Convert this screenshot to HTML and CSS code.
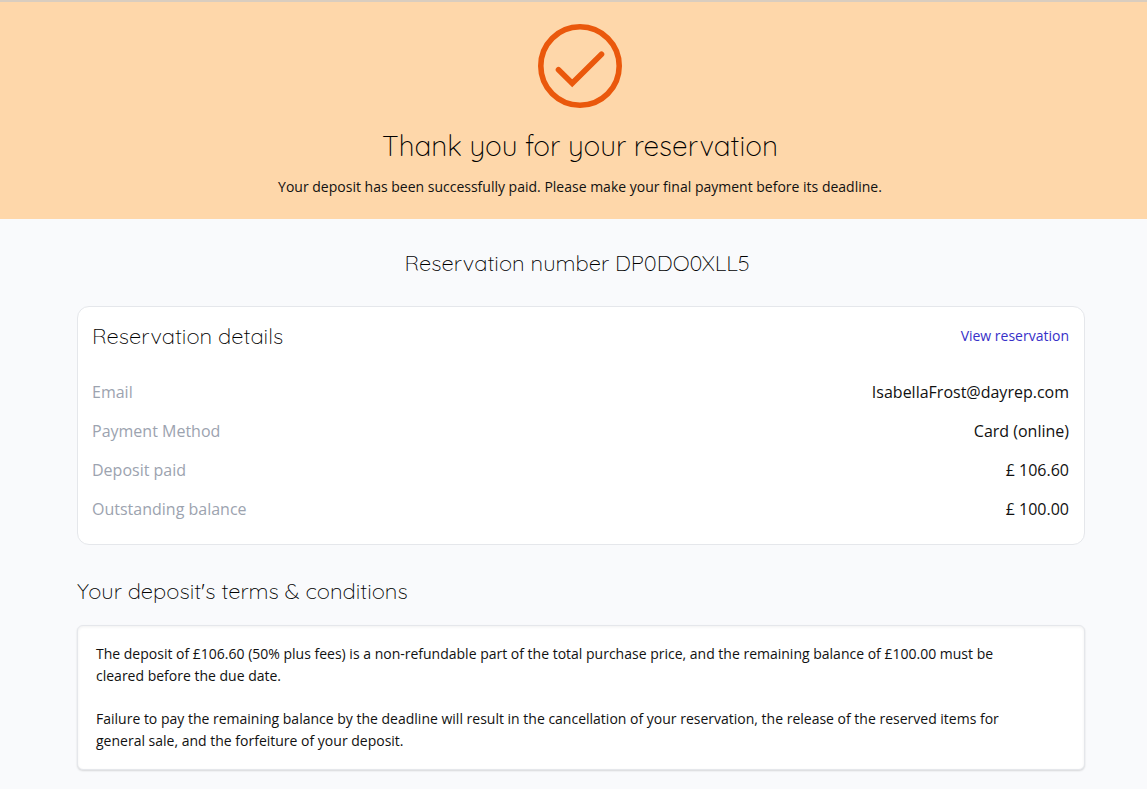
FILE: index.html
```html
<!DOCTYPE html>
<html lang="en">
<head>
    <meta charset="utf-8" />
    <meta name="viewport" content="width=device-width, initial-scale=1">
    <title>Reservation confirmed</title>
    <link rel="stylesheet" href="styles.css">
</head>
<body>
    <header class="hero">
        <svg class="check" viewBox="0 0 84 84" aria-hidden="true">
            <circle cx="42" cy="42" r="39.2" />
            <path d="M20.5 45.8 L34.2 59.2 L63.5 30.2" />
        </svg>
        <h1>Thank you for your reservation</h1>
        <p>Your deposit has been successfully paid. Please make your final payment before its deadline.</p>
    </header>

    <main class="content">
        <h2 class="number">Reservation number DP0DO0XLL5</h2>

        <section class="card">
            <div class="card-head">
                <h2>Reservation details</h2>
                <a href="#">View reservation</a>
            </div>
            <dl class="details">
                <div class="row">
                    <dt>Email</dt>
                    <dd>IsabellaFrost@dayrep.com</dd>
                </div>
                <div class="row">
                    <dt>Payment Method</dt>
                    <dd>Card (online)</dd>
                </div>
                <div class="row">
                    <dt>Deposit paid</dt>
                    <dd>£ 106.60</dd>
                </div>
                <div class="row">
                    <dt>Outstanding balance</dt>
                    <dd>£ 100.00</dd>
                </div>
            </dl>
        </section>

        <h2 class="terms-title">Your deposit's terms &amp; conditions</h2>
        <section class="terms">
            <p>The deposit of £106.60 (50% plus fees) is a non-refundable part of the total purchase price, and the remaining balance of £100.00 must be cleared before the due date.</p>
            <p>Failure to pay the remaining balance by the deadline will result in the cancellation of your reservation, the release of the reserved items for general sale, and the forfeiture of your deposit.</p>
        </section>
    </main>
</body>
</html>
```

FILE: styles.css
```css
* {
    box-sizing: border-box;
    margin: 0;
    padding: 0;
}

body {
    background: #f9fafc;
    color: #111;
    font-family: "Open Sans", "Noto Sans", sans-serif;
    font-size: 14px;
    line-height: 22px;
}

h1, h2 {
    color: #000;
    font-family: Quicksand, Lato, sans-serif;
    font-weight: 300;
}

h1 {
    font-size: 28px;
    line-height: 36px;
}

h2 {
    font-size: 22px;
    line-height: 28px;
}

.hero {
    display: flex;
    flex-direction: column;
    align-items: center;
    padding: 22px 62px 21px 75px;
    border-top: 2px solid #d9cdbf;
    background: #fed7aa;
    text-align: center;
}

.check {
    width: 84px;
    height: 84px;
    fill: none;
    stroke: #ea580c;
    stroke-width: 5.6;
    stroke-linecap: round;
}

.hero h1 {
    margin: 20px 0 12px;
}

.content {
    padding: 30px 62px 18px 77px;
}

.number {
    margin-bottom: 29px;
    padding-right: 8px;
    text-align: center;
}

.card {
    padding: 15px 15px 15px 14px;
    border: 1px solid #e5e7eb;
    border-radius: 12px;
    background: #fff;
}

.card-head {
    display: flex;
    justify-content: space-between;
    align-items: center;
    margin-bottom: 23px;
}

.card-head a {
    color: #3730c8;
    text-decoration: none;
}

.row {
    display: flex;
    justify-content: space-between;
    padding: 8px 0;
    font-size: 16px;
    line-height: 23px;
}

.row dt {
    color: #9ca3af;
}

.terms-title {
    margin: 32px 0 20px;
}

.terms {
    padding: 17px 48px 17px 18px;
    border: 1px solid #e5e7eb;
    border-radius: 6px;
    background: #fff;
    box-shadow: 0 1px 2px rgba(0, 0, 0, 0.14), inset 0 1px 3px rgba(0, 0, 0, 0.06);
}

.terms p + p {
    margin-top: 21px;
}
```
